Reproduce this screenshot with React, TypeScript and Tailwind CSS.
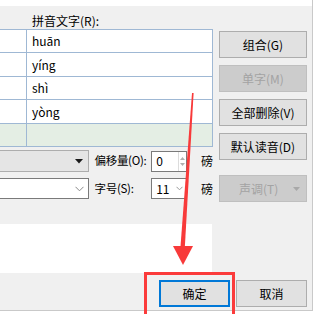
import React from 'react';

const font = "font-['Noto_Sans_CJK_SC','Noto_Sans',sans-serif]";

const rows = [
  { py: 'huān', h: 'h-[23px]' },
  { py: 'yíng', h: 'h-[24px]' },
  { py: 'shì', h: 'h-[23px]' },
  { py: 'yòng', h: 'h-[24px]' },
  { py: '', h: 'h-[23px]', green: true },
];

function Btn({ label, disabled, className = '' }: { label: string; disabled?: boolean; className?: string }) {
  return (
    <div
      className={
        'flex h-[27px] items-center justify-center border text-[12px] leading-none ' +
        (disabled ? 'border-[#bfbfbf] bg-[#cccccc] text-[#a3a3a3] ' : 'border-[#adadad] bg-[#e1e1e1] text-black ') +
        className
      }
    >
      {label}
    </div>
  );
}

export default function App() {
  return (
    <div className={`relative h-[314px] w-[320px] overflow-hidden bg-white ${font}`}>
      <div className="flex h-[311px] w-[313px] flex-col border-b border-r border-[#c9c9c9] bg-[#f0f0f0]">
        <div className="h-[6px] bg-white" />
        <div className="flex">
          {/* left side */}
          <div className="flex w-[213px] flex-col">
            <div className="h-[23px] pl-[32px] pt-[7px] text-[12px] leading-[16px] text-black">拼音文字(R):</div>
            <div className="border-r border-t border-[#9fb8d4] bg-white">
              {rows.map((r, i) => (
                <div
                  key={i}
                  className={`flex ${r.h} border-b border-[#9fb8d4] ${r.green ? 'bg-[#e4eee4]' : 'bg-white'}`}
                >
                  <div className="w-[27px] shrink-0 border-r border-[#9fb8d4]" />
                  <div className="flex items-center pl-[5px] text-[12px] leading-none text-black">{r.py}</div>
                </div>
              ))}
            </div>

            <div className="mt-[3px] flex h-[22px] items-center text-[12px] text-black">
              <div className="flex h-[22px] w-[89px] items-center justify-end border-y border-r border-[#adadad] bg-[#e5e5e5] pr-[5px]">
                <svg width="8" height="5" viewBox="0 0 8 5">
                  <path d="M0 0h8L4 4.5z" fill="#1a1a1a" />
                </svg>
              </div>
              <div className="ml-[6px] w-[57px] text-[11.5px] leading-none tracking-[-0.3px]">偏移量(O):</div>
              <div className="flex h-[21px] w-[36px] items-center border border-[#7a7a7a] bg-white">
                <span className="flex-1 pl-[4px] leading-none">0</span>
                <div className="flex h-full w-[8px] flex-col items-center justify-center gap-[3px] border-l border-[#dcdcdc]">
                  <svg width="5" height="3" viewBox="0 0 5 3"><path d="M0 3L2.5 0 5 3z" fill="#b0b0b0" /></svg>
                  <svg width="5" height="3" viewBox="0 0 5 3"><path d="M0 0h5L2.5 3z" fill="#b0b0b0" /></svg>
                </div>
              </div>
              <div className="ml-[14px] leading-none">磅</div>
            </div>

            <div className="mt-[6px] flex h-[21px] items-center text-[12px] text-black">
              <div className="flex h-[21px] w-[89px] items-center justify-end border-y border-r border-[#7a7a7a] bg-white pr-[4px]">
                <svg width="9" height="6" viewBox="0 0 9 6">
                  <path d="M0.5 0.8L4.5 4.8 8.5 0.8" fill="none" stroke="#8a8a8a" strokeWidth="1" />
                </svg>
              </div>
              <div className="ml-[6px] w-[57px] text-[11.5px] leading-none tracking-[-0.3px]">字号(S):</div>
              <div className="flex h-[21px] w-[36px] items-center border border-[#7a7a7a] bg-white">
                <span className="flex-1 pl-[4px] leading-none">11</span>
                <svg className="mr-[3px]" width="7" height="5" viewBox="0 0 7 5">
                  <path d="M0.5 0.8L3.5 3.8 6.5 0.8" fill="none" stroke="#9a9a9a" strokeWidth="1" />
                </svg>
              </div>
              <div className="ml-[14px] leading-none">磅</div>
            </div>

            <div className="mt-[25px] h-[49px] w-[212px] bg-white" />
          </div>

          {/* right buttons */}
          <div className="ml-[6px] flex w-[88px] flex-col gap-[7px] pt-[25px]">
            <Btn label="组合(G)" />
            <Btn label="单字(M)" disabled />
            <Btn label="全部删除(V)" />
            <Btn label="默认读音(D)" />
            <div className="mt-[8px] flex h-[27px] items-center border border-[#bfbfbf] bg-[#cccccc] text-[12px] leading-none text-[#a3a3a3]">
              <span className="ml-[19px] flex-1">声调(T)</span>
              <svg className="mr-[6px]" width="7" height="4" viewBox="0 0 7 4">
                <path d="M0 0h7L3.5 4z" fill="#a8a8a8" />
              </svg>
            </div>
          </div>
        </div>

        <div className="mt-[7px] flex justify-end gap-[6px] pr-[5px]">
          <Btn label="确定" className="w-[71px] !border-2 !border-[#0078d7]" />
          <Btn label="取消" className="w-[71px]" />
        </div>
      </div>

      {/* annotation overlay */}
      <div className="absolute left-[144px] top-[272px] h-[60px] w-[91px] border-[3px] border-[#fb3b3b]" />
      <svg className="absolute left-0 top-0" width="320" height="314" viewBox="0 0 320 314">
        <polygon points="192,93 193.6,93 184.8,248 180.4,248" fill="#f83a3a" />
        <polygon points="173,246 193,246 183,265" fill="#f83a3a" />
      </svg>
    </div>
  );
}
